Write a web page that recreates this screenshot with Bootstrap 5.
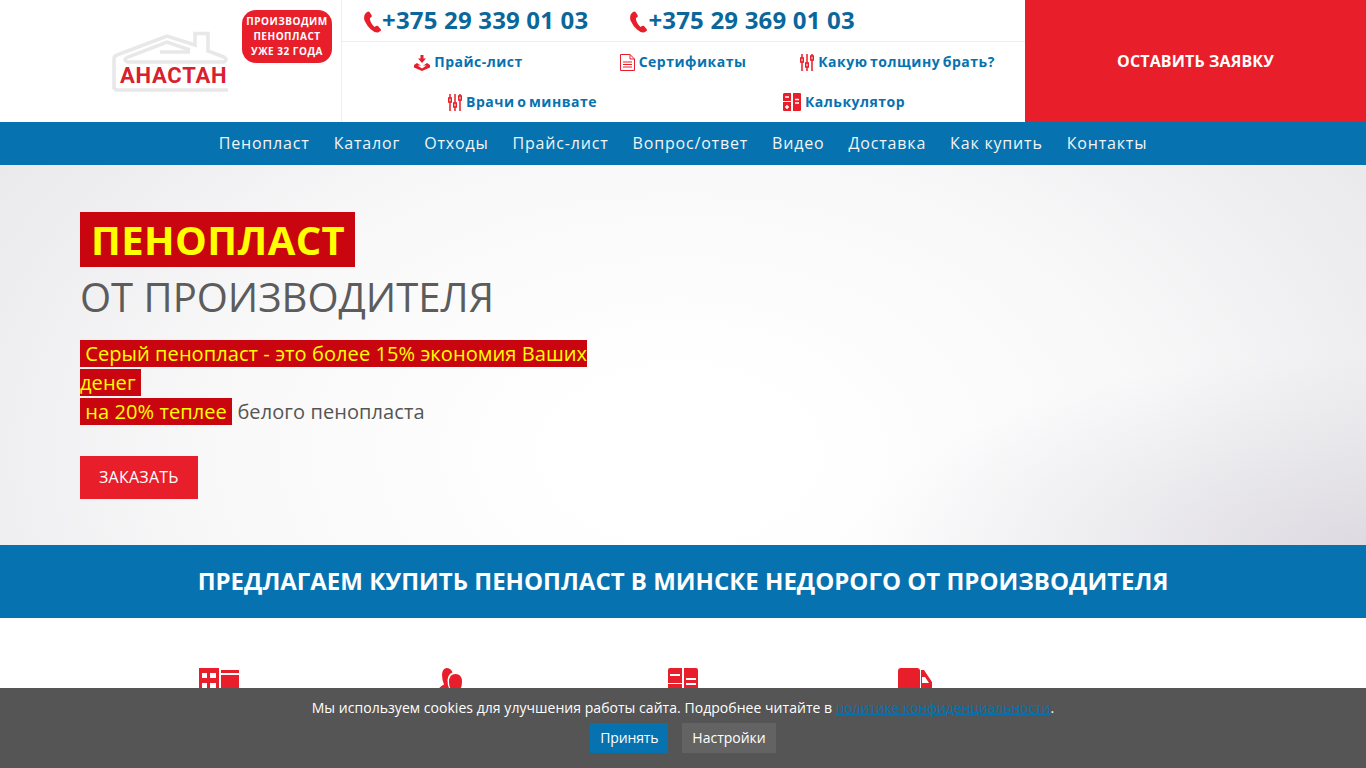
<!DOCTYPE html>
<html lang="ru"><head><meta charset="utf-8"><title>Анастан</title>
<link rel="stylesheet" href="https://cdn.jsdelivr.net/npm/bootstrap@5.3.0/dist/css/bootstrap.min.css">
<style>
html,body{height:768px;overflow:hidden}
body{font-family:"Open Sans",sans-serif;color:#555;background:#fff}
a{text-decoration:none}
.hdr{height:122px}
.hdr-logo{width:342px;border-right:1px solid #eee;padding:10px 9px 0 0}
.hdr-mid{width:683px}
.hdr-cta{width:341px;background:#e81e2a;color:#fff;font-size:16px;font-weight:700;letter-spacing:.13px}
.logo-box{width:116px;height:62px;margin:21px 14px 0 0;position:relative}
.logo-word{position:absolute;left:8px;top:33px;font:700 22px/24px "Roboto",sans-serif;letter-spacing:.75px;color:#d8202f}
.since{width:90px;height:53px;background:#e81e2a;border-radius:14px;color:#fff;font-size:10px;font-weight:700;line-height:15px;letter-spacing:.5px;padding-top:4px}
.phones{height:42px;border-bottom:1px solid #eee;padding:0 0 2px 22px;gap:42px}
.phone{font-size:24px;font-weight:700;color:#0b679b;line-height:38px;letter-spacing:.18px}
.ph-i{margin-top:4px}
.link-row{height:40px;padding-bottom:2px}
.lnk{font-size:14px;font-weight:700;color:#0672b0;letter-spacing:.5px;word-spacing:-1.5px}
.c-253{width:253px}.c-176{width:176px}.c-361{width:361px}.c-282{width:282px}
.nav-bar{height:43px;background:#0672af;gap:24px;padding-bottom:2px}
.nav-bar a{color:#f4f4f4;font-size:16px;letter-spacing:.82px}
.hero{height:380px;padding:47px 0 0 80px;background:radial-gradient(ellipse 500px 190px at 100% 100%,rgba(214,211,219,.7),rgba(214,211,219,0)),radial-gradient(ellipse 800px 520px at 680px 290px,#fff 15%,#f8f8f9 60%,#eeeef0 88%,#e9e9eb 105%)}
.h-a{display:inline-block;background:#c9060f;color:#ff0;font-size:40px;font-weight:700;line-height:55px;padding:0 10px 0 11px;letter-spacing:.4px}
.h-b{font-size:40px;line-height:59px;color:#5c5c5c;text-transform:uppercase;height:61px}
.h-txt{width:520px;font-size:20px;line-height:29px;margin-top:11px;color:#555;letter-spacing:.08px}
.h-txt span{background:#c9060f;color:#ff0}
.order{background:#e81e2a;color:#fff;font-size:16px;padding:0 19px;height:43px;line-height:43px;display:inline-block;margin-top:30px;letter-spacing:.25px}
.band{height:73px;background:#0672af;color:#fff;font-size:24px;font-weight:700;padding-bottom:2px}
.feat{padding:50px 0 0 103px}
.feat div{width:232px;text-align:center}
.person{margin-right:3px}
.cookie{height:80px;background:#555;color:#fff;font-size:14px;padding-top:10px}
.cookie-text{line-height:20px;letter-spacing:.04px}
.cookie-text a{color:#0672af;text-decoration:underline;letter-spacing:-.11px}
.ck-row{gap:14px;margin-top:5px}
.ck-btn{font-size:14px;color:#fff;height:30px;line-height:30px;padding:0 10px;background:#0672af}
.ck-ok{letter-spacing:-.15px}
.ck-alt{background:#636363}
</style></head><body>
<header class="hdr d-flex">
 <div class="hdr-logo d-flex justify-content-end align-items-start">
  <div class="logo-box">
   <svg width="116" height="62" viewBox="0 0 116 62" fill="none" stroke="#e8e8e8" stroke-width="3.500"><path d="M2 58V28Q2 25 5 24L55 5 83 14V2.500H96V20L112 26Q116 29 112 31H16Q10 29 16 26L55 11 78 19"/><path d="M2 56Q2 59 6 59H116"/><path d="M48 21H78"/></svg>
   <span class="logo-word">АНАСТАН</span>
  </div>
  <div class="since text-center">ПРОИЗВОДИМ<br>ПЕНОПЛАСТ<br>УЖЕ 32 ГОДА</div>
 </div>
 <div class="hdr-mid">
  <div class="phones d-flex align-items-center">
   <a class="phone d-flex align-items-center" href="#"><svg class="ph-i" width="18" height="22" viewBox="0 0 18 22"><path fill="#e81e2a" d="M3 1 1 3Q-.5 6 .5 9.500 3 15 7 18.500 11 22 14 21.500L16.500 20Q17.500 19 16.500 18L14 15Q13 14.500 12 15L10.500 16Q9 15 7 11.500 5.500 8.500 6 7L7.500 6Q8 5 7.500 4L5.500 1Q4.500 0 3 1Z"/></svg>+375 29 339 01 03</a>
   <a class="phone d-flex align-items-center" href="#"><svg class="ph-i" width="18" height="22" viewBox="0 0 18 22"><path fill="#e81e2a" d="M3 1 1 3Q-.5 6 .5 9.500 3 15 7 18.500 11 22 14 21.500L16.500 20Q17.500 19 16.500 18L14 15Q13 14.500 12 15L10.500 16Q9 15 7 11.500 5.500 8.500 6 7L7.500 6Q8 5 7.500 4L5.500 1Q4.500 0 3 1Z"/></svg>+375 29 369 01 03</a>
  </div>
  <div class="link-row d-flex align-items-center">
   <div class="text-center c-253"><a class="lnk" href="#"><svg width="16" height="16" viewBox="0 0 16 16" class="me-1 align-text-bottom"><path fill="#e81e2a" d="M6.500 0h3v3.500H12L8 8 4 3.500h2.500zM0 10 3 8 8 11.500 13 8 16 10V12.500L8 16 0 12.500z"/><path fill="#fff" d="M3.500 10.500H12.500L8 13.500z"/></svg>Прайс-лист</a></div>
   <div class="text-center c-176"><a class="lnk" href="#"><svg width="15" height="17" viewBox="0 0 15 17" class="me-1 align-text-bottom" fill="none" stroke="#e81e2a"><path d="M.5.500H10L14.500 5V16.500H.5zM10 .5V5H14.500M3 8H12M3 10.500H12M3 13H12"/></svg>Сертификаты</a></div>
   <div class="text-center c-253"><a class="lnk" href="#"><svg width="14" height="17" viewBox="0 0 14 17" class="me-1 align-text-bottom" fill="none" stroke="#e81e2a" stroke-width="1.500"><path d="M2 0V4M2 8V17M7 0V9M7 13V17M12 0V2M12 6V17"/><rect x=".75" y="4" width="2.500" height="4"/><rect x="5.750" y="9" width="2.500" height="4"/><rect x="10.750" y="2" width="2.500" height="4"/></svg>Какую толщину брать?</a></div>
  </div>
  <div class="link-row d-flex align-items-center">
   <div class="text-center c-361"><a class="lnk" href="#"><svg width="14" height="17" viewBox="0 0 14 17" class="me-1 align-text-bottom" fill="none" stroke="#e81e2a" stroke-width="1.500"><path d="M2 0V4M2 8V17M7 0V9M7 13V17M12 0V2M12 6V17"/><rect x=".75" y="4" width="2.500" height="4"/><rect x="5.750" y="9" width="2.500" height="4"/><rect x="10.750" y="2" width="2.500" height="4"/></svg>Врачи о минвате</a></div>
   <div class="text-center c-282"><a class="lnk" href="#"><svg width="18" height="18" viewBox="0 0 18 18" class="me-1 align-text-bottom"><path fill="#e81e2a" d="M1 0H8V8H0V1ZM10 0H17Q18 0 18 1V17Q18 18 17 18H10ZM0 9H8V18H1Q0 18 0 17Z"/><path stroke="#fff" stroke-width="1.500" fill="none" d="M2 4H6M12 6.500H16M12 10H16M2 14H6M4 12V16"/></svg>Калькулятор</a></div>
  </div>
 </div>
 <a class="hdr-cta d-flex align-items-center justify-content-center" href="#">ОСТАВИТЬ ЗАЯВКУ</a>
</header>
<nav class="nav-bar d-flex align-items-center justify-content-center">
 <a href="#">Пенопласт</a><a href="#">Каталог</a><a href="#">Отходы</a><a href="#">Прайс-лист</a><a href="#">Вопрос/ответ</a><a href="#">Видео</a><a href="#">Доставка</a><a href="#">Как купить</a><a href="#">Контакты</a>
</nav>
<section class="hero">
 <div class="h-a">ПЕНОПЛАСТ</div>
 <div class="h-b">от производителя</div>
 <div class="h-txt"><span>&nbsp;Серый пенопласт - это более 15% экономия Ваших денег&nbsp;</span><br><span>&nbsp;на 20% теплее&nbsp;</span> белого пенопласта</div>
 <a class="order" href="#">ЗАКАЗАТЬ</a>
</section>
<section class="band d-flex align-items-center justify-content-center">ПРЕДЛАГАЕМ КУПИТЬ ПЕНОПЛАСТ В МИНСКЕ НЕДОРОГО ОТ ПРОИЗВОДИТЕЛЯ</section>
<section class="feat d-flex">
 <div><svg width="40" height="40" viewBox="0 0 40 40"><path fill="#e81e2a" d="M0 0H20V40H0ZM22 2H40V5H22ZM22 7H40V40H22Z"/><path fill="#fff" d="M3 5H8V10H3ZM11 5H17V10H11ZM3 15H8V20H3ZM11 15H17V20H11Z"/></svg></div>
 <div><svg class="person" width="26" height="40" viewBox="0 0 26 40"><path fill="#e81e2a" d="M5 7Q5 1 9.500 0 14 0 15.500 4.500 11 6 10.500 12 10.500 17 12 20L9 24H1Q1 19 7 16.500 5 12 5 7ZM18.500 6Q25 6 25 14 25 23 18.500 25 12 23 12 14 12 6 18.500 6Z"/></svg></div>
 <div><svg width="30" height="40" viewBox="0 0 30 40"><path fill="#e81e2a" d="M2 0H14V15H0V2Q0 0 2 0ZM16 0H28Q30 0 30 2V38Q30 40 28 40H16ZM0 16H14V40H2Q0 40 0 38Z"/><path stroke="#fff" stroke-width="2" d="M2 7H12M18 11H28M18 16H28"/></svg></div>
 <div><svg width="34" height="40" viewBox="0 0 34 40"><path fill="#e81e2a" d="M3 0H19Q22 0 22 3V40H0V3Q0 0 3 0ZM23 2H26L34 14V40H23Z"/><path fill="#fff" d="M24 9H27L31 15H24Z"/></svg></div>
</section>
<div class="cookie position-fixed bottom-0 start-0 end-0 text-center">
 <div class="cookie-text">Мы используем cookies для улучшения работы сайта. Подробнее читайте в <a href="#">политике конфиденциальности</a>.</div>
 <div class="ck-row d-flex justify-content-center"><a class="ck-btn ck-ok" href="#">Принять</a><a class="ck-btn ck-alt" href="#">Настройки</a></div>
</div>
<script src="https://cdn.jsdelivr.net/npm/bootstrap@5.3.0/dist/js/bootstrap.bundle.min.js"></script>
</body></html>
